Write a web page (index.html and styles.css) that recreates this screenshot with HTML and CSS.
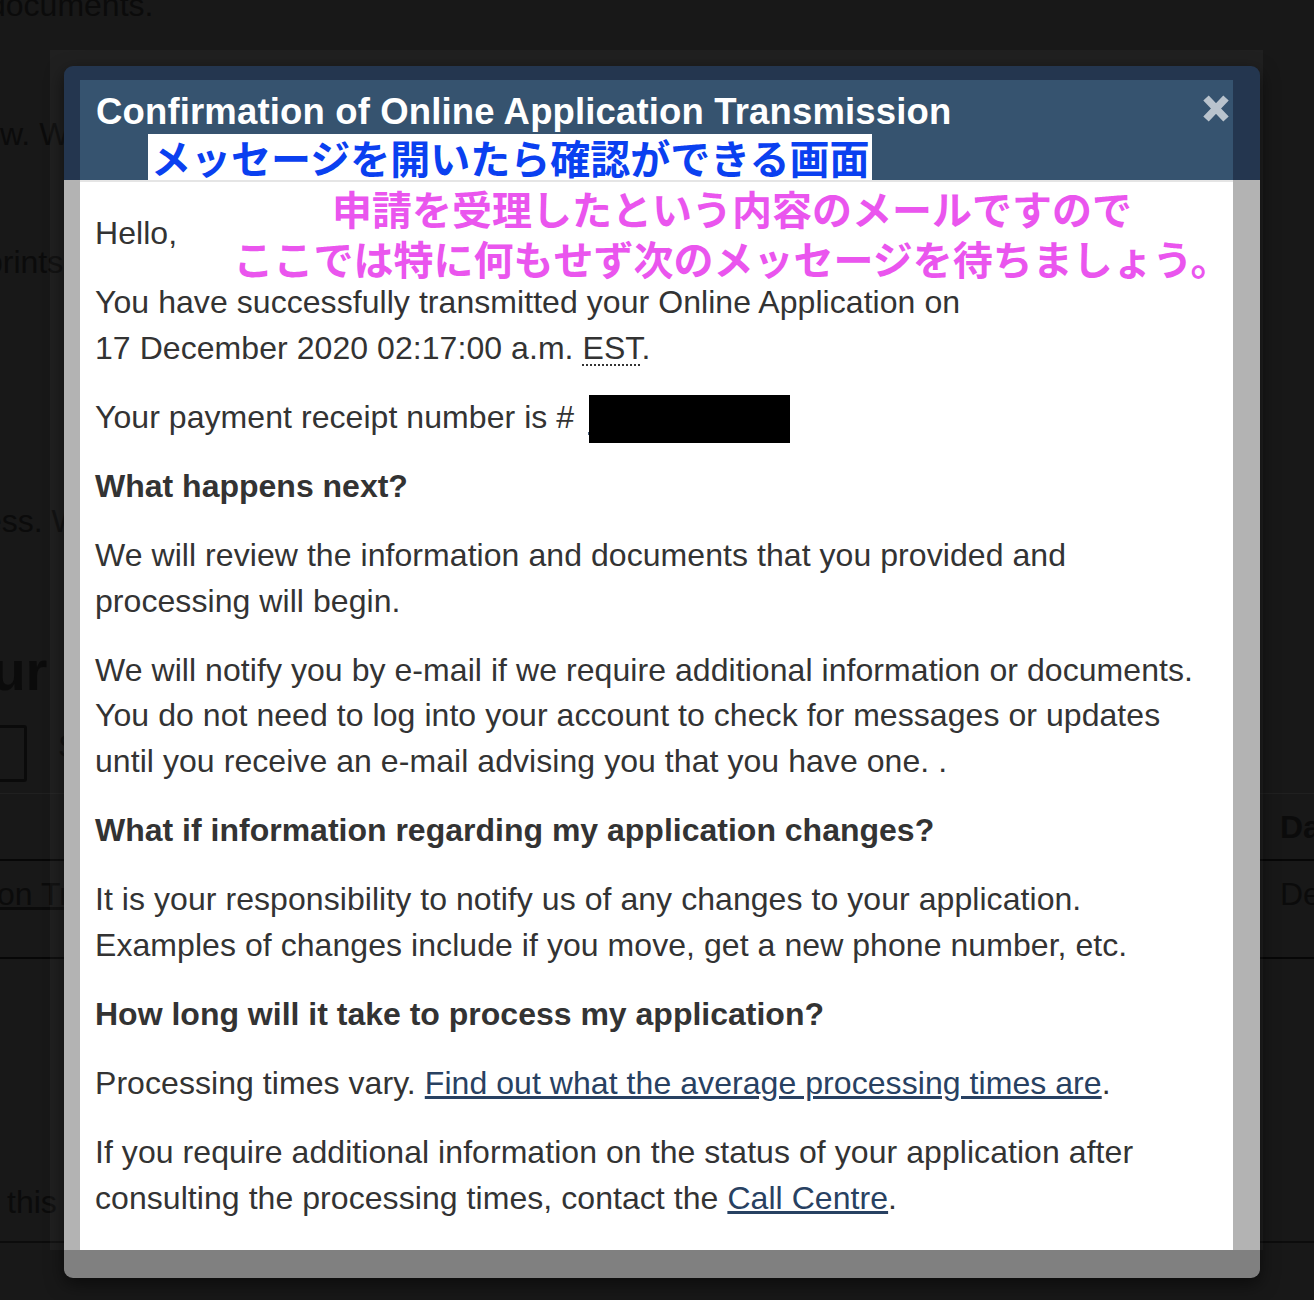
FILE: index.html
```html
<!DOCTYPE html>
<html lang="en">
<head>
<meta charset="utf-8">
<title>Confirmation of Online Application Transmission</title>
<link rel="stylesheet" href="styles.css">
</head>
<body>
<div class="bg">
  <div class="bgl l1">documents.</div>
  <div class="bgl l2">w. We will send you a message</div>
  <div class="bgl l3">prints and photo</div>
  <div class="bgl l4">ess. We will</div>
  <div class="bgl l5">Your account</div>
  <div class="bgrow"><span class="chk"></span><span class="bgtxt">Show</span></div>
  <div class="bgtable">
    <div class="bgth"><span class="c1"></span><span class="c2">Date</span></div>
    <div class="bgtr"><span class="c1"><span class="bglink">on Transmission</span></span><span class="c2">December</span></div>
  </div>
  <div class="bgl l7">this</div>
</div>

<div class="dim"></div>

<div class="modal">
  <div class="mtop">
    <div class="mhead">
      <h2 class="mtitle">Confirmation of Online Application Transmission</h2>
      <button class="mclose" aria-label="Close">
        <svg width="28" height="29" viewBox="0 0 28 29"><path d="M4 4 L24 25 M24 4 L4 25" stroke="#b9c3cd" stroke-width="7.5" fill="none"/></svg>
      </button>
    </div>
  </div>
  <div class="mmid">
    <div class="mbody">
      <p>Hello,</p>
      <p>You have successfully transmitted your Online Application on<br>17 December 2020 02:17:00 a.m. <abbr class="abbr" title="Eastern Standard Time">EST</abbr>.</p>
      <p>Your payment receipt number is # <span class="receipt"><span class="rlink">9</span><span class="redact"></span></span></p>
      <p class="h">What happens next?</p>
      <p>We will review the information and documents that you provided and<br>processing will begin.</p>
      <p>We will notify you by e-mail if we require additional information or documents.<br>You do not need to log into your account to check for messages or updates<br>until you receive an e-mail advising you that you have one. .</p>
      <p class="h">What if information regarding my application changes?</p>
      <p>It is your responsibility to notify us of any changes to your application.<br>Examples of changes include if you move, get a new phone number, etc.</p>
      <p class="h">How long will it take to process my application?</p>
      <p>Processing times vary. <a class="lnk" href="#">Find out what the average processing times are</a>.</p>
      <p>If you require additional information on the status of your application after<br>consulting the processing times, contact the <a class="lnk" href="#">Call Centre</a>.</p>
    </div>
  </div>
  <div class="mbot"></div>

  <div class="note-blue">メッセージを開いたら確認ができる画面</div>
  <div class="note-pink">申請を受理したという内容のメールですので<br>ここでは特に何もせず次のメッセージを待ちましょう。</div>
</div>
</body>
</html>
```

FILE: styles.css
```css
html, body {
  margin: 0;
  padding: 0;
  background: #181818;
  overflow: hidden;
}
body {
  width: 1314px;
  height: 1300px;
  position: relative;
  font-family: "Liberation Sans", Arial, sans-serif;
}

/* background page (behind the dim overlay) */
.bg {
  font-size: 32px;
  line-height: 46px;
  color: #0b0b0b;
  white-space: nowrap;
}
.l1 { margin-top: -18px; text-indent: -12px; }
.l2 { margin-top: 83px; text-indent: 0; }
.l3 { margin-top: 82px; text-indent: -15px; }
.l4 { margin-top: 213px; text-indent: -16px; }
.l5 {
  margin-top: 95px;
  text-indent: -76px;
  font-weight: 700;
  font-size: 56px;
  line-height: 64px;
}
.bgrow {
  margin-top: 22px;
  display: flex;
  align-items: flex-start;
  gap: 31px;
  height: 57px;
}
.chk {
  width: 57px;
  height: 57px;
  margin-left: -30px;
  box-sizing: border-box;
  border: 3px solid #0a0a0a;
  border-radius: 3px;
}
.bgtxt { margin-top: -2px; }
.bgtable {
  margin-top: 11px;
  border-top: 1px solid #202020;
}
.bgth, .bgtr {
  display: grid;
  grid-template-columns: 1283px auto;
  margin-left: -3px;
  border-bottom: 2px solid #070707;
}
.bgth { padding: 10px 0 9px; font-weight: 700; }
.bgtr { padding: 10px 0 40px; }
.bglink { text-decoration: underline; }
.l7 {
  margin-top: 220px;
  text-indent: 7px;
  padding-bottom: 16px;
  border-bottom: 2px solid #0c0c0c;
}

/* dim overlay panel */
.dim {
  position: absolute;
  left: 50px;
  top: 50px;
  width: 1213px;
  height: 1200px;
  background: rgba(255, 255, 255, 0.035);
}

/* modal */
.modal {
  position: absolute;
  left: 64px;
  top: 66px;
  width: 1196px;
  height: 1212px;
  border-radius: 9px;
  overflow: hidden;
  box-shadow: 0 6px 18px rgba(0, 0, 0, 0.55);
  display: flex;
  flex-direction: column;
}
.mtop {
  background: #24364f;
  padding: 14px 27px 0 16px;
}
.mhead {
  background: #36536f;
  height: 100px;
  box-sizing: border-box;
  padding: 12px 3px 0 16px;
  display: flex;
  justify-content: space-between;
  align-items: flex-start;
}
.mtitle {
  margin: 0;
  color: #ffffff;
  font-weight: 700;
  font-size: 36.5px;
  line-height: 40px;
  letter-spacing: 0.15px;
  white-space: nowrap;
}
.mclose {
  margin-top: 2px;
  padding: 0;
  border: 0;
  background: none;
  width: 28px;
  height: 29px;
  display: block;
}
.mclose svg { display: block; }
.mmid {
  background: #b3b3b3;
  padding: 0 27px 0 16px;
}
.mbody {
  background: #ffffff;
  height: 1070px;
  box-sizing: border-box;
  border-top: 2px solid #e5e5e5;
  padding: 29px 15px 0;
  overflow: hidden;
}
.mbody p {
  margin: 0 0 23.35px;
  font-size: 32px;
  line-height: 45.71px;
  letter-spacing: 0.06px;
  color: #333333;
  white-space: nowrap;
}
.mbody p.h { font-weight: 700; letter-spacing: 0; }
.abbr {
  text-decoration: underline dotted 2px;
  text-underline-offset: 6px;
  color: #333333;
}
.receipt {
  display: inline-block;
  vertical-align: middle;
  margin: -12px 0 -12px 5px;
  height: 48px;
  position: relative;
}
.rlink {
  color: #284162;
  text-decoration: underline;
  line-height: 48px;
}
.redact {
  position: absolute;
  left: 1px;
  top: 0;
  width: 201px;
  height: 48px;
  background: #000000;
}
.lnk {
  color: #284162;
  text-decoration: underline;
}

.mbot {
  background: #808080;
  height: 28px;
}

/* annotations */
.note-blue {
  position: absolute;
  left: 84px;
  top: 68px;
  width: 724px;
  height: 46px;
  box-sizing: border-box;
  padding-left: 3px;
  background: #ffffff;
  color: #0a40f0;
  font-family: "Noto Sans CJK JP", sans-serif;
  font-weight: 700;
  font-size: 40px;
  line-height: 46px;
  white-space: nowrap;
}
.note-pink {
  position: absolute;
  left: 168px;
  top: 117px;
  width: 1000px;
  text-align: center;
  color: #ea55ee;
  font-family: "Noto Sans CJK JP", sans-serif;
  font-weight: 700;
  font-size: 40px;
  line-height: 50px;
  white-space: nowrap;
}
```
